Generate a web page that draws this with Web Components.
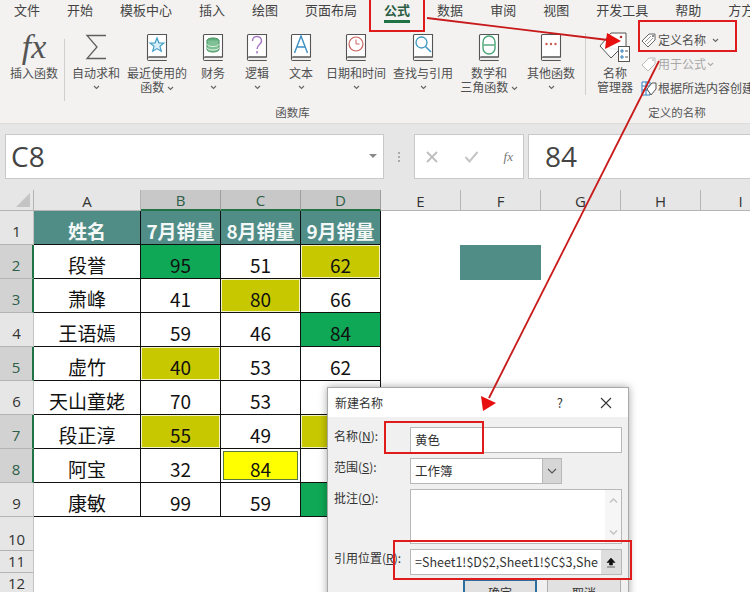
<!DOCTYPE html>
<html lang="zh"><head><meta charset="utf-8"><title>Excel</title>
<style>
html,body{margin:0;padding:0;background:#fff}
body{width:750px;height:592px;overflow:hidden;position:relative;font-family:"Noto Sans CJK SC","Noto Sans",sans-serif;color:#444}
</style></head><body>
<x-tabs></x-tabs>
<x-ribbon>
  <x-group label="函数库" width="585">
    <x-func w="60" l="4"><span slot="icon" class="fx" style="font:italic 34px 'Liberation Serif',serif;color:#555;line-height:30px">fx</span>插入函数</x-func>
    <x-vsep></x-vsep>
    <x-func w="52" l="5" more><svg slot="icon" width="22" height="26" viewBox="0 0 22 26"><path d="M21 1.500H2l10 11.500L2 24.500h19" fill="none" stroke="#5f5f5f" stroke-width="1.300"/></svg>自动求和</x-func>
    <x-func w="70">
      <x-book slot="icon" kind="star"></x-book>最近使用的<br>函数 <x-chev></x-chev></x-func>
    <x-func w="42" more><x-book slot="icon" kind="db"></x-book>财务</x-func>
    <x-func w="46" more><x-book slot="icon" kind="q"></x-book>逻辑</x-func>
    <x-func w="42" more><x-book slot="icon" kind="a"></x-book>文本</x-func>
    <x-func w="68" more><x-book slot="icon" kind="clock"></x-book>日期和时间</x-func>
    <x-func w="66" more><x-book slot="icon" kind="find"></x-book>查找与引用</x-func>
    <x-func w="66"><x-book slot="icon" kind="theta"></x-book>数学和<br>三角函数 <x-chev></x-chev></x-func>
    <x-func w="58" more><x-book slot="icon" kind="dots"></x-book>其他函数</x-func>
  </x-group>
  <x-vsep></x-vsep>
  <x-group label="定义的名称" width="182">
    <x-func w="52" l="3"><svg slot="icon" width="32" height="33" viewBox="0 0 32 33"><path d="M1 15 12 2h15v16" fill="#fff" stroke="#555"/><path d="M1 15 12 27l7-7" fill="#fff" stroke="#555"/><circle cx="22" cy="6" r="1.3" fill="#a33"/><rect x="19.500" y="15.500" width="11" height="15" fill="#fff" stroke="#555"/><path d="M22 19h2v2h-2zM22 25h2v2h-2z" fill="none" stroke="#2f7fc1"/><path d="M26 20h3M26 26h3" stroke="#555"/></svg>名称<br>管理器</x-func>
    <x-name-col></x-name-col>
  </x-group>
</x-ribbon>
<x-formula></x-formula>
<x-sheet></x-sheet>
<x-dialog></x-dialog>
<x-marks></x-marks>
<script>
const def=(name,css,html,setup)=>customElements.define(name,class extends HTMLElement{
  connectedCallback(){ if(this.shadowRoot) return; const r=this.attachShadow({mode:'open'}); r.innerHTML='<style>'+css+'</style>'+(typeof html==='function'?html(this):html); if(setup) setup(this,r); }
});
const FONT='"Noto Sans CJK SC","Noto Sans",sans-serif';

def('x-tabs',`:host{display:flex;height:23px;background:#f3f2f1;padding-left:14px;gap:27px;font:13px/20px ${FONT};color:#444;overflow:hidden;white-space:nowrap;box-sizing:border-box}
 span{display:block;height:23px;box-sizing:border-box;position:relative;flex:none}
 .on{font-weight:700;color:#2b5d44}
 .on::after{content:"";position:absolute;left:0;right:0;bottom:0;height:3px;background:#217346}`,
 ()=>['文件','开始','模板中心','插入','绘图','页面布局','公式','数据','审阅','视图','开发工具','帮助','方方格子'].map(t=>`<span class="${t==='公式'?'on':''}">${t}</span>`).join(''));

def('x-ribbon',`:host{display:flex;height:100px;background:#f3f2f1;overflow:hidden;border-bottom:1px solid #dcdcdc;box-sizing:content-box}`,`<slot></slot>`);

def('x-group',`:host{display:flex;flex-direction:column;flex:none;box-sizing:border-box}
 .b{display:flex;height:80px;padding-top:6px;box-sizing:border-box}
 .l{font:11.500px/16px ${FONT};color:#555;text-align:center;margin-top:1px}`,
 h=>`<div class="b"><slot></slot></div><div class="l">${h.getAttribute('label')}</div>`,
 h=>{h.style.width=h.getAttribute('width')+'px'});

def('x-vsep',`:host{display:block;flex:none;width:1px;height:62px;margin-top:10px;background:#cfcfcf}`,``);

def('x-func',`:host{display:flex;flex-direction:column;align-items:center;flex:none;font:12px/14px ${FONT};color:#505050;text-align:center;box-sizing:border-box;white-space:nowrap}
 .i{height:36px;display:flex;align-items:center;justify-content:center}
 .t{margin-top:1px}
 .c{display:flex;justify-content:center;height:14px;align-items:center}`,
 h=>`<div class="i"><slot name="icon"></slot></div><div class="t"><slot></slot></div>${h.hasAttribute('more')?'<div class="c"><x-chev></x-chev></div>':''}`,
 h=>{h.style.width=h.getAttribute('w')+'px'; if(h.getAttribute('l')) h.style.marginLeft=h.getAttribute('l')+'px'});

def('x-chev',`:host{display:inline-block;width:7px;height:5px;vertical-align:middle}svg{display:block}`,
 `<svg width="7" height="5" viewBox="0 0 7 5"><path d="M1 1l2.500 2.500L6 1" fill="none" stroke="#666" stroke-width="1.100"/></svg>`);

def('x-book',`:host{display:block;width:22px;height:29px}svg{display:block}`,h=>{
 const k=h.getAttribute('kind');
 const g={
  star:'<path d="M11 5l1.900 4.800 5 .3-3.900 3.200 1.300 5L11 15.600 6.700 18.300l1.300-5L4.100 10.100l5-.3z" fill="#d8eff7" stroke="#3f9fc5" stroke-width="1.200"/>',
  db:'<ellipse cx="11" cy="7.500" rx="6" ry="2.500" fill="#63ad7c" stroke="#3f8f5d"/><path d="M5 7.500v9c0 1.400 2.700 2.500 6 2.500s6-1.100 6-2.500v-9" fill="#7fc094" stroke="#3f8f5d"/><path d="M5 11c0 1.400 2.700 2.500 6 2.500s6-1.100 6-2.500M5 14.500c0 1.400 2.700 2.500 6 2.500s6-1.100 6-2.500" fill="none" stroke="#e9f5ec"/>',
  q:'<path d="M6.500 8c0-6 9-6 9 0 0 3.500-4.500 3.500-4.500 8" fill="none" stroke="#a779c4" stroke-width="1.500"/><path d="M11 18v2.500" stroke="#a779c4" stroke-width="1.500"/>',
  a:'<path d="M4.500 20 11 3l6.500 17M6.700 14h8.600" fill="none" stroke="#3e8fc2" stroke-width="1.400"/>',
  clock:'<circle cx="11" cy="11" r="7" fill="#fff" stroke="#c8625c" stroke-width="1.200"/><path d="M11 6.500V11h3.500" fill="none" stroke="#c8625c"/>',
  find:'<circle cx="9.500" cy="9.500" r="5.500" fill="none" stroke="#3d97c2" stroke-width="1.300"/><path d="M13.500 13.500 19 19" stroke="#3d97c2" stroke-width="1.500"/>',
  theta:'<rect x="5" y="3" width="12" height="18" rx="6" fill="none" stroke="#49a577" stroke-width="1.400"/><path d="M5.500 12h11" stroke="#49a577" stroke-width="1.400"/>',
  dots:'<circle cx="6.500" cy="11" r="1.200" fill="#c65b4e"/><circle cx="11" cy="11" r="1.200" fill="#c65b4e"/><circle cx="15.500" cy="11" r="1.200" fill="#c65b4e"/>'
 }[k];
 return `<svg width="22" height="29" viewBox="0 0 22 29"><path d="M1.500 26V2.500a1 1 0 0 1 1-1h18V24H3a1.500 1.500 0 0 0-1.500 2 1.500 1.500 0 0 0 1.500 1.500h17.500" fill="#fff" stroke="#555" stroke-width="1.100"/><path d="M2 25h18v2H2z" fill="#eee"/><path d="M3 24h17.500M3 27.500h17.500" stroke="#555" fill="none"/>${g}</svg>`;
});

def('x-name-col',`:host{display:flex;flex-direction:column;font:12px/24px ${FONT};color:#505050;white-space:nowrap;margin-top:-1px}
 div{display:flex;align-items:center;height:24px;gap:1px}
 .d{color:#a8a8a8}
 svg{flex:none;display:block}`,
 `<div><svg width="16" height="16" viewBox="0 0 16 16"><path d="M1 9 8 2h6v6l-7 7z" fill="#fff" stroke="#666"/><path d="M4 10 10 4M6 12l6-6" stroke="#999"/><circle cx="12" cy="4" r="1" fill="#666"/></svg>定义名称 &nbsp;<x-chev></x-chev></div>
 <div class="d"><svg width="16" height="16" viewBox="0 0 16 16"><path d="M1 9 8 2h6v6l-7 7z" fill="#fff" stroke="#bbb"/><circle cx="12" cy="4" r="1" fill="#bbb"/></svg>用于公式<x-chev style="opacity:.5"></x-chev></div>
 <div><svg width="16" height="16" viewBox="0 0 16 16"><path d="M1 2h8v13H1z" fill="#fff" stroke="#2f7fc1"/><path d="M1 6h8M1 10h8M5 2v13" stroke="#2f7fc1"/><path d="M6 9l5-6h4v6l-5 6z" fill="#fff" stroke="#555"/></svg>根据所选内容创建</div>`);

def('x-formula',`:host{display:flex;height:66px;background:#e6e6e6;padding:10px 0 11px 5px;box-sizing:border-box;font-family:"Open Sans","Noto Sans",sans-serif}
 .box{background:#fff;border:1px solid #c9c9c9;box-sizing:border-box;height:45px;display:flex;align-items:center;flex:none;color:#444;font-size:28px;padding-bottom:2px}
 .n{width:379px;padding-left:5px;justify-content:space-between;padding-right:6px}
 .car{width:0;height:0;border:4px solid transparent;border-top:4px solid #888;border-bottom:0}
 .dots{width:30px;flex:none;display:flex;flex-direction:column;align-items:center;justify-content:center;gap:2px}
 .dots i{display:block;width:2px;height:2px;background:#aaa}
 .b{width:110px;padding:0 10px;justify-content:space-between;color:#b5b5b5}
 .f{flex:1;margin-left:4px;padding-left:16px;border-right:0}
 .fx{font:italic 13px "Liberation Serif",serif;color:#777}`,
 `<div class="box n">C8<i class="car"></i></div>
 <div class="dots"><i></i><i></i><i></i></div>
 <div class="box b"><svg width="14" height="14" viewBox="0 0 14 14"><path d="M2 2l10 10M12 2 2 12" stroke="#bdbdbd" stroke-width="1.800"/></svg><svg width="15" height="14" viewBox="0 0 15 14"><path d="M1.500 7l4 4.500L13.500 2" fill="none" stroke="#c4c4c4" stroke-width="2"/></svg><span class="fx">fx</span></div>
 <div class="box f">84</div>`);

def('x-cell',`:host{display:flex;align-items:center;justify-content:center;box-sizing:border-box;min-width:0;overflow:hidden;font:19px/1 ${FONT};color:#111;white-space:nowrap;padding-top:5px;position:relative}`,`<slot></slot>`);

def('x-sheet',`:host{display:block;height:403px;overflow:hidden;background:#fff}
 .g{display:grid;grid-template-columns:34px 107px repeat(8,80px);grid-template-rows:21px repeat(10,34px) 22px 22px;width:781px}
 .h{background:#e6e6e6;display:flex;align-items:center;justify-content:center;font:15px/1 "Open Sans","Noto Sans",sans-serif;color:#333;box-sizing:border-box;border-right:1px solid #b4b4b4;border-bottom:1px solid #b4b4b4;padding-top:2px}
 .rh{padding-top:8px;border-right-color:#c4c4c4}
 .r10{padding-top:12px}
 .r11{padding-top:0}
 .col.sel{background:#c8c8c8;color:#2d5f48;border-bottom:2px solid #217346;border-right-color:#9f9f9f}
 .row.sel{background:#d2d2d2;color:#2d5f48;border-right:2px solid #217346}
 .corner{background:#e6e6e6;border-right:1px solid #b4b4b4;border-bottom:1px solid #b4b4b4;position:relative}
 .corner::after{content:"";position:absolute;right:3px;bottom:3px;border-left:14px solid transparent;border-bottom:14px solid #c4c4c4}
 .t{border-right:1px solid #111;border-bottom:1px solid #111}
 .hd{background:#508d86;color:#f4f8f7;font-weight:700}
 .gr{background:#0fa856}
 .ol{background:#c8c800;box-shadow:inset 0 0 0 1px #f2f2c8}
 .ye{background:#ffff00;box-shadow:inset 0 0 0 2px #fff,inset 0 0 0 3px #5a7a3c}
 .te{background:#508d86;box-shadow:-1px 0 #508d86,0 1px #508d86,-1px 1px #508d86}`,
 `<div class="g"></div>`,
 (h,r)=>{
  const g=r.querySelector('.g');
  const add=(cls,txt='',tag='div')=>{const e=document.createElement(tag);e.className=cls;e.textContent=txt;g.appendChild(e);return e};
  add('corner');
  'ABCDEFGHI'.split('').forEach(c=>add('h col'+('BCD'.includes(c)?' sel':''),c));
  const data=[['姓名','7月销量','8月销量','9月销量'],['段誉','95','51','62'],['萧峰','41','80','66'],['王语嫣','59','46','84'],['虚竹','40','53','62'],['天山童姥','70','53',''],['段正淳','55','49',''],['阿宝','32','84',''],['康敏','99','59','']];
  const fills={'1,1':'gr','1,3':'ol','2,2':'ol','3,3':'gr','4,1':'ol','6,1':'ol','6,3':'ol','7,2':'ye','8,3':'gr'};
  const sel=[2,3,5,7,8];
  for(let i=0;i<12;i++){
    const n=i+1;
    add('h rh row'+(sel.includes(n)?' sel':'')+(n===10?' r10':'')+(n>10?' r11':''),String(n));
    for(let c=0;c<9;c++){
      if(i<9&&c<4){
        add('t '+(i===0?'hd ':'')+(fills[i+','+c]||''),data[i][c],'x-cell');
      } else add((i===1&&c===5)?'te':'');
    }
  }
 });

def('x-dialog',`:host{position:absolute;left:327px;top:387px;width:302px;height:215px;background:#f0f0f0;border:1px solid #a8a8a8;box-sizing:border-box;box-shadow:0 0 8px rgba(0,0,0,.35);font:12px/16px ${FONT};color:#333}
 .title{height:29px;background:#fff;display:flex;align-items:center;padding:0 16px 0 7px;font-size:12px}
 .title b{font-weight:400;flex:1}
 .title span{font-size:13px;margin-right:37px}
 form{display:grid;grid-template-columns:82px 212px;grid-template-rows:26px 26px 55px 26px;row-gap:5px;padding-top:10px}
 label{padding:0 0 0 6px;line-height:18px}
 .in{background:#fff;border:1px solid #b8b8b8;box-sizing:border-box;padding:0 4px;display:flex;align-items:center;font-size:12.500px;overflow:hidden;white-space:nowrap}
 .sel{width:152px;padding:0 0 0 4px;justify-content:space-between}
 .sel i{width:18px;align-self:stretch;background:#d6d6d6;border-left:1px solid #b8b8b8;display:flex;align-items:center;justify-content:center}
 .ta{align-items:stretch;padding:0;justify-content:flex-end}
 .ta i{width:16px;display:flex;flex-direction:column;justify-content:space-between;align-items:center;padding:8px 0;background:#f6f6f6}
 .rf{padding:0 0 0 4px;justify-content:space-between}
 .rf span{overflow:hidden;flex:1}
 .rf i{width:20px;align-self:stretch;background:#dedede;display:flex;align-items:center;justify-content:center;flex:none}
 .btns{display:flex;margin-left:135px;gap:10px;margin-top:4px}
 .btn{width:74px;height:28px;background:#e1e1e1;border:1px solid #adadad;box-sizing:border-box;text-align:center;line-height:26px}
 .ok{border:2px solid #2c6f9f;line-height:24px}`,
 `<div class="title"><b>新建名称</b><span>?</span><svg width="12" height="12" viewBox="0 0 12 12"><path d="M1 1l10 10M11 1 1 11" stroke="#333" stroke-width="1.100"/></svg></div>
 <form>
  <label>名称(<u>N</u>):</label><div class="in">黄色</div>
  <label>范围(<u>S</u>):</label><div class="in sel">工作簿<i><svg width="10" height="6" viewBox="0 0 10 6"><path d="M1 1l4 4 4-4" fill="none" stroke="#555" stroke-width="1.100"/></svg></i></div>
  <label>批注(<u>O</u>):</label><div class="in ta"><i><svg width="9" height="5" viewBox="0 0 9 5"><path d="M1 4.500l3.500-3.500L8 4.500" fill="none" stroke="#c4c4c4" stroke-width="1.500"/></svg><svg width="9" height="5" viewBox="0 0 9 5"><path d="M1 .5l3.500 3.500L8 .5" fill="none" stroke="#c4c4c4" stroke-width="1.500"/></svg></i></div>
  <label>引用位置(<u>R</u>):</label><div class="in rf"><span>=Sheet1!$D$2,Sheet1!$C$3,She</span><i><svg width="10" height="11" viewBox="0 0 10 11"><path d="M5 1l4 4.500H6.500V8h-3V5.500H1zM1 10h8" fill="#111" stroke="#111" stroke-width=".6"/></svg></i></div>
 </form>
 <div class="btns"><div class="btn ok">确定</div><div class="btn">取消</div></div>`);

def('x-marks',`:host{position:absolute;left:0;top:0;width:750px;height:592px;pointer-events:none}svg{display:block}`,
 `<svg width="750" height="592" viewBox="0 0 750 592" fill="none" stroke="#e01b1b" stroke-width="2">
  <rect x="370" y="-3" width="54" height="34"/>
  <rect x="639" y="21" width="97" height="30"/>
  <rect x="385" y="422" width="98" height="31"/>
  <rect x="394" y="541" width="237" height="38"/>
  <path d="M427 18 608 40" stroke="#c81a1a" stroke-width="1.800"/>
  <path d="M621 41 607 33 605 49z" fill="#e80f0f" stroke="none"/>
  <path d="M659 61 489 398" stroke="#c81a1a" stroke-width="1.800"/>
  <path d="M483 411 481 396 496 403z" fill="#e80f0f" stroke="none"/>
 </svg>`);
</script>
</body></html>
